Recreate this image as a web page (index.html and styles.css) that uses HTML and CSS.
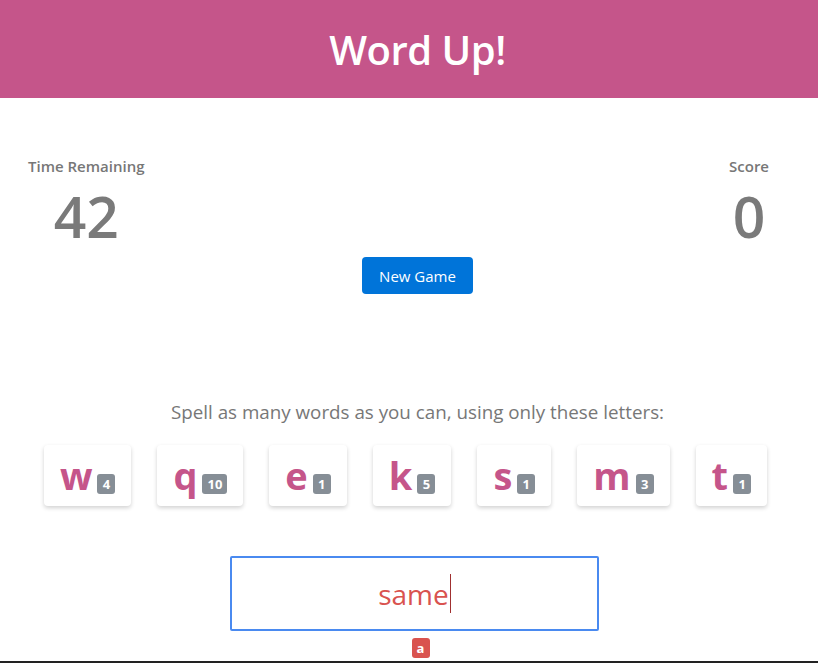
FILE: index.html
```html
<!DOCTYPE html>
<html>
<head>
<meta charset="utf-8">
<title>Word Up!</title>
<link rel="stylesheet" href="styles.css">
</head>
<body>
<div class="app">
  <header class="header"><h1 class="title">Word Up!</h1></header>
  <section class="stats">
    <div class="stat stat-time">
      <div class="stat-label">Time Remaining</div>
      <div class="stat-value">42</div>
    </div>
    <div class="stat stat-score">
      <div class="stat-label">Score</div>
      <div class="stat-value">0</div>
    </div>
  </section>
  <div class="actions"><button class="btn">New Game</button></div>
  <p class="instructions">Spell as many words as you can, using only these letters:</p>
  <div class="tiles">
    <div class="tile"><span class="letter">w</span><span class="badge">4</span></div>
    <div class="tile"><span class="letter">q</span><span class="badge">10</span></div>
    <div class="tile"><span class="letter">e</span><span class="badge">1</span></div>
    <div class="tile"><span class="letter">k</span><span class="badge">5</span></div>
    <div class="tile"><span class="letter">s</span><span class="badge">1</span></div>
    <div class="tile"><span class="letter">m</span><span class="badge">3</span></div>
    <div class="tile"><span class="letter">t</span><span class="badge">1</span></div>
  </div>
  <div class="entry">
    <div class="input"><span class="input-text">same</span><span class="caret"></span></div>
    <span class="badge badge-red">a</span>
  </div>
</div>
</body>
</html>
```
FILE: styles.css
```css
html { overflow: hidden; }
body {
  margin: 0;
  font-family: "Open Sans", "Noto Sans", sans-serif;
  color: #777;
  background: #fff;
}
.app {
  width: 835px;
  height: 661px;
  border-bottom: 2px solid #222;
  overflow: hidden;
}
.header {
  background: #c5558a;
  height: 98px;
  display: flex;
  align-items: center;
  justify-content: center;
}
.title {
  margin: 0;
  color: #fff;
  font-size: 40px;
  font-weight: 600;
  letter-spacing: -0.5px;
}
.stats {
  display: flex;
  justify-content: space-between;
  padding: 58px 66px 0 28px;
}
.stat {
  display: flex;
  flex-direction: column;
  align-items: center;
}
.stat-label {
  font-size: 15px;
  font-weight: 600;
  line-height: 20px;
  color: #777;
}
.stat-value {
  font-size: 57px;
  font-weight: 600;
  line-height: 64px;
  margin-top: 8px;
  color: #7a7a7a;
}
.actions {
  display: flex;
  justify-content: center;
  margin-top: 9px;
}
.btn {
  background: #0074d9;
  color: #fff;
  border: none;
  border-radius: 4px;
  font-family: inherit;
  font-size: 15px;
  width: 111px;
  height: 37px;
  padding: 0;
}
.instructions {
  margin: 106px 0 0;
  text-align: center;
  font-size: 18.8px;
  line-height: 24px;
  color: #777;
}
.tiles {
  display: flex;
  justify-content: center;
  gap: 26px;
  margin-top: 21px;
  padding-right: 24px;
}
.tile {
  height: 61px;
  padding: 0 16px 12px;
  box-sizing: border-box;
  display: flex;
  align-items: flex-end;
  justify-content: center;
  gap: 5px;
  border-radius: 4px;
  background: #fff;
  box-shadow: 0 2px 4px rgba(0,0,0,0.18);
}
.letter {
  font-size: 38px;
  font-weight: 700;
  line-height: 38px;
  color: #c5558a;
}
.badge {
  display: inline-flex;
  align-items: center;
  justify-content: center;
  min-width: 18px;
  height: 20px;
  padding: 0 5px;
  box-sizing: border-box;
  border-radius: 3px;
  background: #868e96;
  color: #fff;
  font-size: 13px;
  font-weight: 700;
  margin-bottom: 0;
}
.entry {
  display: flex;
  flex-direction: column;
  align-items: center;
  margin-top: 50px;
}
.input {
  width: 369px;
  height: 75px;
  box-sizing: border-box;
  border: 2px solid #4a8af0;
  border-radius: 2px;
  display: flex;
  align-items: center;
  justify-content: center;
  margin-left: -6px;
}
.input-text {
  font-size: 28px;
  color: #d9534f;
}
.caret {
  width: 1px;
  height: 39px;
  background: #a03030;
  margin-left: 1px;
}
.badge-red {
  background: #d9534f;
  margin-top: 7px;
  margin-left: 6px;
}
```
